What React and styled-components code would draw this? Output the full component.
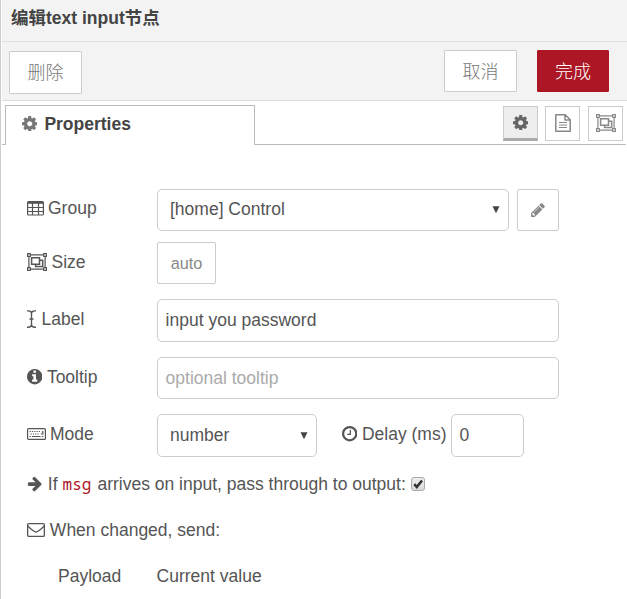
import React from "react";
import styled, { createGlobalStyle, css } from "styled-components";

const Global = createGlobalStyle`
  * { box-sizing: border-box; }
  html, body { margin: 0; padding: 0; background: #fff; overflow: hidden; }
  body { font: 17.5px/24px "Liberation Sans", Arial, "Noto Sans CJK SC", sans-serif; color: #555; }
`;

const Tray = styled.div`
  width: 627px;
  height: 599px;
  padding-left: 1px;
  border-left: 1px solid #ccc;
  overflow: hidden;
`;
const Header = styled.header`
  height: 42px;
  padding: 6px 0 0 9px;
  background: #f3f3f3;
  border-bottom: 1px solid #ddd;
  color: #444;
  font-weight: 700;
  font-size: 17.5px;
`;
const Toolbar = styled.div`
  display: flex;
  align-items: flex-start;
  height: 59px;
  padding: 8px 18px 0 7px;
  background: #f3f3f3;
  border-bottom: 1px solid #ddd;
`;
const TrayButton = styled.button`
  width: ${(p) => p.$width || 73}px;
  height: ${(p) => p.$height || 42}px;
  margin: ${(p) => p.$margin || "0"};
  padding: 0 0 3px;
  border: 1px solid ${(p) => (p.$primary ? "#ad1625" : "#ccc")};
  border-radius: 1px;
  background: ${(p) => (p.$primary ? "#ad1625" : "#fff")};
  color: ${(p) => (p.$primary ? "#fff" : "#777")};
  font: 300 18px/24px "Noto Sans CJK SC", sans-serif;
`;
const TabBar = styled.div`
  display: flex;
  height: 44px;
  padding-top: 4px;
`;
const TabEdge = styled.div`
  width: 3px;
  border-bottom: 1px solid #bbb;
`;
const Tab = styled.div`
  display: flex;
  align-items: center;
  gap: 7px;
  width: 250px;
  padding: 0 0 4px 16px;
  border: 1px solid #bbb;
  border-bottom: 0;
  color: #444;
  font-weight: 700;
  svg { color: #777; }
`;
const TabTools = styled.div`
  display: flex;
  flex: 1;
  justify-content: flex-end;
  padding: 1px 3px 0 0;
  margin-right: 1px;
  border-bottom: 1px solid #bbb;
`;
const ToolButton = styled.button`
  display: flex;
  align-items: center;
  justify-content: center;
  width: 35px;
  height: 35px;
  margin-left: ${(p) => p.$gap || 0}px;
  padding: 0 0 1px;
  background: #fff;
  border: 1px solid #ccc;
  color: #888;
  ${(p) => p.$active && css`
    padding: 0;
    background: #eee;
    color: #666;
    border-bottom: 3px solid #aaa;
  `}
`;
const Form = styled.div`
  padding: 44px 0 0 25px;
`;
const Row = styled.div`
  display: flex;
  height: ${(p) => p.$height || 42}px;
  margin-bottom: ${(p) => p.$after || 0}px;
`;
const Label = styled.label`
  display: flex;
  align-items: center;
  gap: ${(p) => p.$gap || 4.5}px;
  width: ${(p) => p.$width || 130}px;
  height: ${(p) => p.$height || 40}px;
  padding-left: ${(p) => p.$indent || 0}px;
  white-space: nowrap;
`;
const Field = styled.div`
  display: flex;
  align-items: center;
  justify-content: space-between;
  width: ${(p) => p.$width || 402}px;
  padding: 0 8px ${(p) => p.$drop || 2}px ${(p) => p.$pad || 7.6}px;
  border: 1px solid #ccc;
  border-radius: 5px;
  background: #fff;
  color: ${(p) => (p.$muted ? "#aaa" : "#555")};
`;
const SmallButton = styled.button`
  display: flex;
  align-items: center;
  justify-content: center;
  width: ${(p) => p.$width}px;
  margin-left: ${(p) => p.$gap || 0}px;
  padding: 0;
  border: 1px solid #ccc;
  border-radius: 2px;
  background: #fff;
  color: #888;
  font: 16.3px/24px "Liberation Sans", Arial, sans-serif;
`;
const Line = styled.div`
  display: flex;
  align-items: center;
  height: 24px;
  margin-bottom: ${(p) => p.$after || 0}px;
  white-space: pre;
`;
const Code = styled.code`
  margin: 0 6px 0 5px;
  color: #ad1625;
  font: 16px/20px "Noto Sans Mono", "DejaVu Sans Mono", monospace;
`;
const Check = styled.span`
  display: flex;
  width: 14px;
  height: 14px;
  margin-left: 5px;
  border: 1px solid #aaa;
  border-radius: 3px;
  background: linear-gradient(#eee, #d9d9d9);
  color: #333;
`;
const Payload = styled.span`
  width: 98.6px;
  margin-left: 31px;
`;
const Svg = styled.svg`
  display: block;
  flex: none;
`;

const disc = "M1664 896q0 209-103 385.5t-279.5 279.5-385.5 103-385.5-103-279.5-279.5-103-385.5 103-385.5 279.5-279.5 385.5-103 385.5 103 279.5 279.5 103 385.5z";
const paths = {
  cog: "M1152 896q0-106-75-181t-181-75-181 75-75 181 75 181 181 75 181-75 75-181zm512-109v222q0 12-8 23t-20 13l-185 28q-19 54-39 91 35 50 107 138 10 12 10 25t-9 23q-27 37-99 108t-94 71q-12 0-26-9l-138-108q-44 23-91 38-16 136-29 186-7 28-36 28h-222q-14 0-24.5-8.5t-11.5-21.5l-28-184q-49-16-90-37l-141 107q-10 9-25 9-14 0-25-11-126-114-165-168-7-10-7-23 0-12 8-23 15-21 51-66.5t54-70.5q-27-50-41-99l-183-27q-13-2-21-12.5t-8-23.5v-222q0-12 8-23t19-13l186-28q14-46 39-92-40-57-107-138-10-12-10-24 0-10 9-23 26-36 98.5-107.5t94.5-71.5q13 0 26 10l138 107q44-23 91-38 16-136 29-186 7-28 36-28h222q14 0 24.5 8.5t11.5 21.5l28 184q49 16 90 37l142-107q9-9 24-9 13 0 25 10 129 119 165 170 7 8 7 22 0 12-8 23-15 21-51 66.5t-54 70.5q26 50 41 98l183 28q13 2 21 12.5t8 23.5z",
  arrow: "M1600 960q0 54-37 91l-651 651q-39 37-91 37-51 0-90-37l-75-75q-38-38-38-91t38-91l293-293h-704q-52 0-84.5-37.5t-32.5-90.5v-128q0-53 32.5-90.5t84.5-37.5h704l-293-294q-38-36-38-90t38-90l75-75q38-38 90-38 53 0 91 38l651 651q37 35 37 90z",
  clock: "M1024 544v448q0 14-9 23t-23 9h-320q-14 0-23-9t-9-23v-64q0-14 9-23t23-9h224v-352q0-14 9-23t23-9h64q14 0 23 9t9 23zm416 352q0-148-73-273t-198-198-273-73-273 73-198 198-73 273 73 273 198 198 273 73 273-73 198-198 73-273z" + disc,
  info: "M1152 1376v-160q0-14-9-23t-23-9h-96v-512q0-14-9-23t-23-9h-320q-14 0-23 9t-9 23v160q0 14 9 23t23 9h96v320h-96q-14 0-23 9t-9 23v160q0 14 9 23t23 9h448q14 0 23-9t9-23zm-128-896v-160q0-14-9-23t-23-9h-192q-14 0-23 9t-9 23v160q0 14 9 23t23 9h192q14 0 23-9t9-23z" + disc,
  pencil: "M491 1536l91-91-235-235-91 91v107h128v128h107zm523-928q0-22-22-22-10 0-17 7l-542 542q-7 7-7 17 0 22 22 22 10 0 17-7l542-542q7-7 7-17zm-54-192l416 416-832 832h-416v-416zm683 96q0 53-37 90l-166 166-416-416 166-165q36-38 90-38 53 0 91 38l235 234q37 39 37 91z",
};
const Solid = ({ name, size = 15.4, box = "128 128 1536 1536" }) => (
  <Svg width={size} height={size} viewBox={box} fill="currentColor" fillRule="evenodd">
    <path d={paths[name]} />
  </Svg>
);
const TableIcon = () => (
  <Svg width="17" height="15" viewBox="0 0 17 15" fill="none" stroke="currentColor">
    <rect x=".6" y=".6" width="15.8" height="13.4" rx="1" strokeWidth="1.2" />
    <path d="M1 1.7h15" strokeWidth="2.2" />
    <path d="M1 6.5h15M1 10.5h15M5.5 2v12M11.5 2v12" strokeWidth="1.2" />
  </Svg>
);
const GroupIcon = () => (
  <Svg width="20" height="18" viewBox="0 0 20 18" fill="none" stroke="currentColor" strokeWidth="1.2">
    <path d="M3.5 1.9h13M3.5 16.1h13M1.9 3.5v11M18.1 3.5v11" />
    <path d="M.6.6h2.7v2.7H.6zM16.7.6h2.7v2.7h-2.7zM.6 14.7h2.7v2.7H.6zM16.7 14.7h2.7v2.7h-2.7z" />
    <path d="M4.6 4.7h7.9v6.6H4.6zM12.5 7.3h3.2v6.1H8.6v-2" strokeWidth="1.5" />
  </Svg>
);
const FileIcon = () => (
  <Svg width="16" height="18" viewBox="0 0 16 18" fill="none" stroke="currentColor" strokeWidth="1.5">
    <path d="M.8.8h9.4l5 5v11.4H.8zM10 .8v5.1h5.2" strokeLinejoin="round" />
    <path d="M4 8.5h8M4 11h8M4 13.5h8" strokeWidth="1.2" />
  </Svg>
);
const CursorIcon = () => (
  <Svg width="9" height="18" viewBox="0 0 9 18" fill="none" stroke="currentColor" strokeWidth="1.35">
    <path d="M0 .8h1.2Q4.5.8 4.5 3.5Q4.5.8 7.8.8H9M4.5 3v12M0 17.2h1.2q3.3 0 3.3-2.7q0 2.7 3.3 2.7H9M2.5 9h4" />
  </Svg>
);
const KeyboardIcon = () => (
  <Svg width="19" height="12" viewBox="0 0 19 12" fill="none" stroke="currentColor">
    <rect x=".6" y=".6" width="17.8" height="10.8" rx="1" strokeWidth="1.2" />
    <path d="M2.6 3.5h11M3.6 6h9" strokeWidth="1.2" strokeDasharray="1.2 1.1" />
    <path d="M15.8 3v3h-2M2.6 8.5h1.3M5 8.5h8.5M14.7 8.5h1.6" strokeWidth="1.2" />
  </Svg>
);
const MailIcon = () => (
  <Svg width="18" height="14" viewBox="0 0 18 14" fill="none" stroke="currentColor" strokeWidth="1.3">
    <rect x=".65" y=".65" width="16.7" height="12.7" rx="1.2" />
    <path d="M.8 3C3 5.5 5 6.6 6.7 8.1Q9 10 11.3 8.1C13 6.6 15 5.5 17.2 3" />
  </Svg>
);
const Caret = () => (
  <Svg width="8" height="10" viewBox="0 0 8 10" fill="#444"><path d="M.5 2.2h7L4 9.2z" /></Svg>
);

export default function App() {
  return (
    <Tray>
      <Global />
      <Header>编辑text input节点</Header>
      <Toolbar>
        <TrayButton $height={43} $margin="1px auto 0 0">删除</TrayButton>
        <TrayButton $margin="0 20px 0 0">取消</TrayButton>
        <TrayButton $primary $width={72}>完成</TrayButton>
      </Toolbar>
      <TabBar>
        <TabEdge />
        <Tab><Solid name="cog" />Properties</Tab>
        <TabTools>
          <ToolButton $active><Solid name="cog" /></ToolButton>
          <ToolButton $gap={7}><FileIcon /></ToolButton>
          <ToolButton $gap={8}><GroupIcon /></ToolButton>
        </TabTools>
      </TabBar>
      <Form>
        <Row $after={11}>
          <Label $gap={4} $height={38}><TableIcon />Group</Label>
          <Field $width={352} $pad={12}>[home] Control<Caret /></Field>
          <SmallButton $width={42} $gap={8}><Solid name="pencil" size={14} /></SmallButton>
        </Row>
        <Row $after={15}>
          <Label><GroupIcon />Size</Label>
          <SmallButton $width={59}>auto</SmallButton>
        </Row>
        <Row $height={43} $after={15}>
          <Label $gap={5.5}><CursorIcon />Label</Label>
          <Field>input you password</Field>
        </Row>
        <Row $after={15}>
          <Label><Solid name="info" />Tooltip</Label>
          <Field $muted $drop={1}>optional tooltip</Field>
        </Row>
        <Row $height={43} $after={15}>
          <Label $gap={4}><KeyboardIcon />Mode</Label>
          <Field $width={160} $pad={12}>number<Caret /></Field>
          <Label as="div" $width={134} $indent={25}><Solid name="clock" />Delay (ms)</Label>
          <Field $width={73}>0</Field>
        </Row>
        <Line $after={22}>
          <Solid name="arrow" size={16} box="128 90 1536 1720" />
          <span> If</span><Code>msg</Code>
          <span>arrives on input, pass through to output:</span>
          <Check>
            <Svg width="12" height="12" viewBox="0 0 12 12" fill="none" stroke="currentColor" strokeWidth="2.6">
              <path d="M2.3 6.2l2.5 2.8L10 2.5" />
            </Svg>
          </Check>
        </Line>
        <Line $after={22}><MailIcon /><span> When changed, send:</span></Line>
        <Line><Payload>Payload</Payload><span>Current value</span></Line>
      </Form>
    </Tray>
  );
}
